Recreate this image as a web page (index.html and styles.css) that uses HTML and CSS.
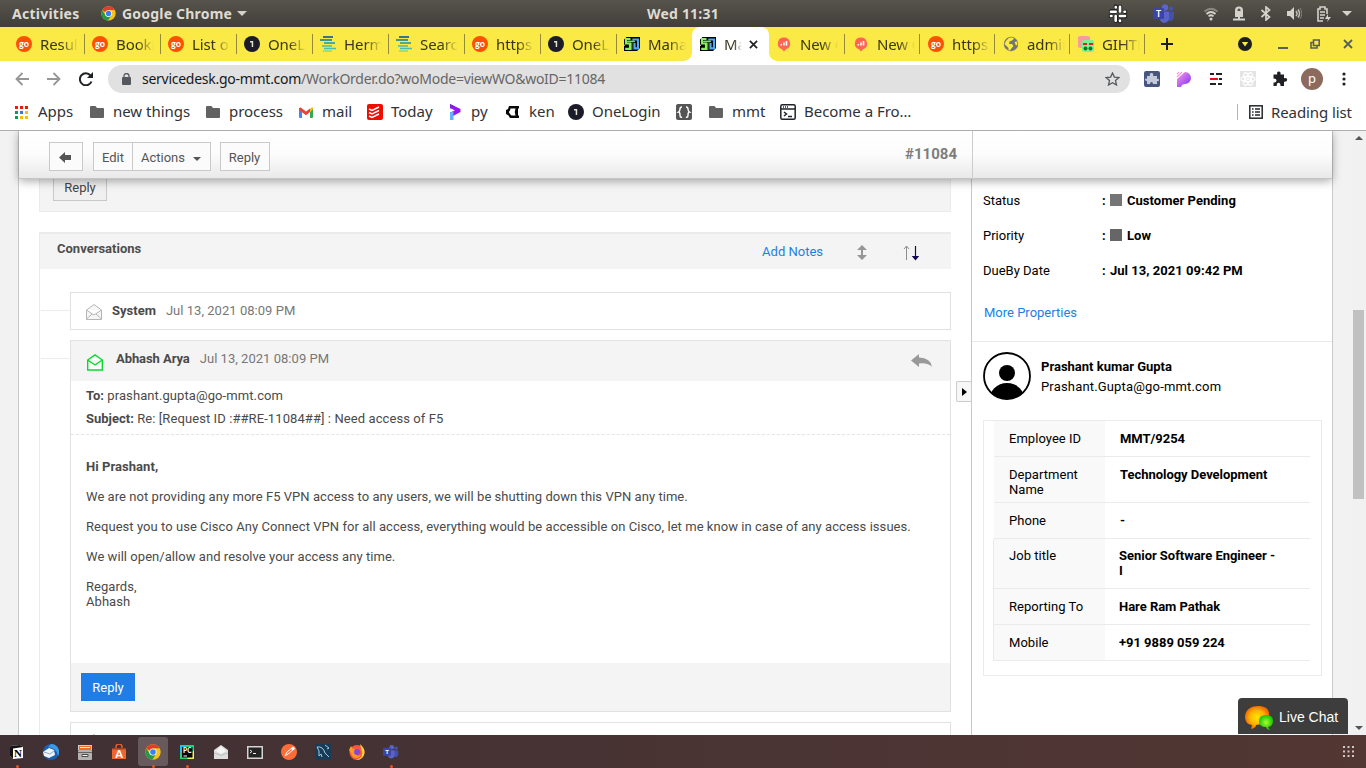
FILE: index.html
```
<!DOCTYPE html>
<html lang="en">
<head>
<meta charset="utf-8">
<title>ManageEngine ServiceDesk Plus</title>
<link rel="stylesheet" href="styles.css">
</head>
<body>
<svg class="defs" aria-hidden="true">
  <symbol id="chrome" viewBox="0 0 48 48"><circle cx="24" cy="24" r="23" fill="#fbc116"/><path d="M4.100 12.500L15 31L24 34L33 30L22 47A23 23 0 0 1 4.100 12.500Z" fill="#279847"/><path d="M4.100 12.500A23 23 0 0 1 43.900 12.500H24L14 20Z" fill="#e33b2e"/><circle cx="24" cy="24" r="10.800" fill="#fff"/><circle cx="24" cy="24" r="8.500" fill="#3b7ff0"/></symbol>
  <symbol id="go" viewBox="0 0 16 16"><circle cx="8" cy="8" r="8" fill="#fd5102"/><text x="8" y="10.600" text-anchor="middle" font-family="Lato, sans-serif" font-weight="900" font-size="9" fill="#fff">go</text></symbol>
  <symbol id="one" viewBox="0 0 16 16"><circle cx="8" cy="8" r="8" fill="#1b1b29"/><path d="M6 5h3.200v6H7.700V6.600H6z" fill="#e4e1d0"/></symbol>
  <symbol id="herm" viewBox="0 0 16 16"><path d="M3 1h10" stroke="#3b7288" stroke-width="2"/><path d="M0 4h12" stroke="#348b94" stroke-width="1.800"/><path d="M4 7h11" stroke="#3ca39a" stroke-width="1.800"/><path d="M2 10h10M4 12.500h12" stroke="#4dbda7" stroke-width="1.600"/><path d="M3 15h9" stroke="#8fd78b" stroke-width="1.600"/></symbol>
  <symbol id="manage" viewBox="0 0 16 16"><path d="M0 3.500L2.500 1H16v11l-3 3H0V10H1L0 8Z" fill="#000"/><path d="M6.500 3H2V7.500H6V12.800H1.200" fill="none" stroke="#8bed63" stroke-width="2.200"/><path d="M8.300 3.500H14V12.300H10.500V7" fill="none" stroke="#51a5f5" stroke-width="2.200"/><path d="M3.500 5h7v.8H3.500ZM7.800 7v7" fill="#8bed63" stroke="#8bed63" stroke-width=".8"/></symbol>
  <symbol id="new" viewBox="0 0 16 16"><path d="M8 1.500a6 6 0 0 1 2.200 11.600L8 15.500l-2-2.300A6 6 0 0 1 8 1.500Z" fill="#ff6554"/><path d="M5.300 9.500V8M8 9.500V6.500M10.500 9.500V5" stroke="#fff" stroke-width="1.600"/></symbol>
  <symbol id="globe" viewBox="0 0 16 16"><circle cx="8" cy="8" r="7.200" fill="#757575"/><path d="M6 1.800q4-1 5 1L9 4.500 6.500 5.500 6 8h3l1.500 2-2.500 3-1 1.500-1.500-.5V12L3 9.500 1.500 8 3 5ZM11.500 6L14 5.500l.5 3-1.500 1Z" fill="#fbe945"/></symbol>
  <symbol id="folder" viewBox="0 0 14 12"><path d="M1 0h4.500l1.500 2h6a1 1 0 0 1 1 1v8a1 1 0 0 1-1 1H1a1 1 0 0 1-1-1V1a1 1 0 0 1 1-1Z" fill="#626262"/></symbol>
  <symbol id="teams" viewBox="0 0 22 20"><circle cx="12" cy="3.500" r="3.200" fill="#5a65c4"/><circle cx="18" cy="4.700" r="2.300" fill="#4552b2"/><path d="M14 8h7v5c0 4-5 5-7 3Z" fill="#4450ae"/><path d="M7 7.500h9v6c0 7-9 7-9 1Z" fill="#5a63c8"/><rect y="4" width="11" height="11" rx="1" fill="#3c44aa"/><text x="5.500" y="12.500" text-anchor="middle" font-family="Lato, sans-serif" font-weight="700" font-size="8.500" fill="#fff">T</text></symbol>
</svg>

<div class="desktop">
  <header class="sysbar">
    <span class="activities">Activities</span>
    <span class="appmenu"><svg width="15" height="15"><use href="#chrome"/></svg><span class="appname">Google Chrome</span><i class="caret"></i></span>
    <span class="clock">Wed 11:31</span>
    <div class="tray">
      <svg width="20" height="20" viewBox="0 0 20 20" fill="none" stroke-linecap="round"><g stroke="#222" stroke-width="4.400"><path d="M7.800 2.500v.2M12 2.800v4M7.500 7.200H3.200M17 8h.2M12.500 12.300h4.700M2.800 12h.2M7.800 12.500v4.200M12 17v.2"/></g><g stroke="#fff" stroke-width="2.600"><path d="M12 2.800v4.700M7.700 7.700H3M7.700 12v4.800M12 12h5"/><path d="M7.800 3v.5M17 7.700h-.5M12 17v-.5M3 12h.5"/></g></svg>
      <svg width="22" height="20"><use href="#teams"/></svg>
      <svg width="14" height="14" viewBox="0 0 14 14" fill="none" stroke-width="1.700"><path d="M.5 4.500Q7-1 13.500 4.500" stroke="#8a8983"/><path d="M2.500 7Q7 3 11.500 7M4.500 9.300Q7 7.200 9.500 9.300" stroke="#d4d2cd"/><circle cx="7" cy="12" r="1.500" fill="#d4d2cd"/></svg>
      <svg width="12" height="15" viewBox="0 0 12 15" fill="#d4d2cd"><path d="M2 11V4.500a4 4 0 0 1 8 0V11ZM5 10h2v2.500h5v2H0v-2h5Z"/><path d="M4.500 5V4a1.500 1.500 0 0 1 3 0v1" fill="#56544d"/></svg>
      <svg width="10" height="15" viewBox="0 0 10 15" fill="none" stroke="#d4d2cd" stroke-width="1.700"><path d="M.5 4l8 7L5 14V1l3.500 3-8 7"/></svg>
      <svg width="15" height="13" viewBox="0 0 15 13"><path d="M0 4h3l4-4v13L3 9H0Z" fill="#d4d2cd"/><path d="M9 4q2 2.500 0 5M11 2.500q3 4 0 8" fill="none" stroke="#c0beb9" stroke-width="1.500"/><path d="M13 1q3.500 5.500 0 11" fill="none" stroke="#85837d"/></svg>
      <svg width="14" height="16" viewBox="0 0 14 16" fill="none" stroke="#d4d2cd" stroke-width="1.600"><path d="M6 15H1V3h2V1h5v2h2v5M3 6h5M3 9h5M3 12h4"/><path d="M11 8l-3 5h3l-1 3 4-5h-3Z" fill="#d4d2cd" stroke="none"/></svg>
      <i class="caret"></i>
    </div>
  </header>

  <nav class="tabs">
    <div class="tab"><svg><use href="#go"/></svg><span>Results</span></div>
    <div class="tab"><svg><use href="#go"/></svg><span>Bookings</span></div>
    <div class="tab"><svg><use href="#go"/></svg><span>List of</span></div>
    <div class="tab"><svg><use href="#one"/></svg><span>OneLogin</span></div>
    <div class="tab"><svg><use href="#herm"/></svg><span>Hermes</span></div>
    <div class="tab"><svg><use href="#herm"/></svg><span>Search</span></div>
    <div class="tab"><svg><use href="#go"/></svg><span>https://</span></div>
    <div class="tab"><svg><use href="#one"/></svg><span>OneLogin</span></div>
    <div class="tab nosep"><svg><use href="#manage"/></svg><span>Manage</span></div>
    <div class="tab active"><svg><use href="#manage"/></svg><span>Manage</span><svg class="close" viewBox="0 0 10 10"><path d="M1 1l8 8M9 1L1 9" stroke="#222" stroke-width="1.900"/></svg></div>
    <div class="tab after"><svg><use href="#new"/></svg><span>New Or</span></div>
    <div class="tab narrow"><svg><use href="#new"/></svg><span>New Or</span></div>
    <div class="tab narrow"><svg><use href="#go"/></svg><span>https://</span></div>
    <div class="tab narrow"><svg><use href="#globe"/></svg><span>admin</span></div>
    <div class="tab narrow"><svg viewBox="0 0 16 16"><rect width="12" height="12" rx="2" fill="#fb9a9d"/><rect x="4" y="4" width="12" height="12" rx="2" fill="#7af293"/><path d="M5 8h4M11 8h4" stroke="#d22" stroke-width="2"/><circle cx="7.500" cy="12.500" r="2" fill="#137b18"/><circle cx="12.500" cy="12.500" r="2" fill="#137b18"/></svg><span>GIHTE</span></div>
    <svg class="plus" viewBox="0 0 12 12"><path d="M6 0v12M0 6h12" stroke="#1d1d1d" stroke-width="2"/></svg>
    <div class="winctl">
      <svg width="14" height="14"><circle cx="7" cy="7" r="7" fill="#1d1e20"/><path d="M3.800 5h6.400L7 9.500Z" fill="#fbe945"/></svg>
      <svg width="10" height="10"><path d="M0 9h10" stroke="#57605b" stroke-width="2"/></svg>
      <svg width="10" height="10" fill="none" stroke="#57605b" stroke-width="1.600"><path d="M3.500 1h5.700v5.500H3.500ZM3 3.500H1V9h6V7"/></svg>
      <svg width="10" height="10"><path d="M1 1l8 8M9 1L1 9" stroke="#57605b" stroke-width="1.800"/></svg>
    </div>
  </nav>

  <div class="toolbar">
    <svg class="nav-btn" width="14" height="14" viewBox="0 0 14 14" fill="none" stroke="#969696" stroke-width="1.800"><path d="M14 7H1.500M7.500 1L1.500 7l6 6"/></svg>
    <svg class="nav-btn" width="14" height="14" viewBox="0 0 14 14" fill="none" stroke="#969696" stroke-width="1.800"><path d="M0 7h12.500M6.500 1l6 6-6 6"/></svg>
    <svg class="nav-btn" width="14" height="14" viewBox="0 0 14 14"><path d="M11.500 3.500A6 6 0 1 0 12.500 9.500" fill="none" stroke="#202124" stroke-width="2"/><path d="M14 0v6H8Z" fill="#202124"/></svg>
    <div class="omnibox">
      <svg width="9" height="12" viewBox="0 0 9 12"><rect y="4" width="9" height="8" rx="1" fill="#55595e"/><path d="M2 5V3a2.500 2.500 0 0 1 5 0v2" fill="none" stroke="#55595e" stroke-width="1.300"/></svg>
      <span class="url"><b>servicedesk.go-mmt.com</b>/WorkOrder.do?woMode=viewWO&amp;woID=11084</span>
      <svg class="star" width="15" height="14" viewBox="0 0 15 14"><path d="M7.500 1l1.900 4.100 4.400.5-3.300 3 1 4.400-4-2.300-4 2.300 1-4.400-3.300-3 4.400-.5Z" fill="none" stroke="#55595e" stroke-width="1.300"/></svg>
    </div>
    <div class="exts">
      <svg viewBox="0 0 16 16"><rect width="16" height="16" rx="2" fill="#47567e"/><path d="M3 5h3q-1-3 1.500-3T9 5h4v3q2-1 2 1t-2 1v3H9q0-2-1.500-2T6 13H3v-3q-2 0-2-1.500T3 8Z" fill="#c3cad8"/></svg>
      <svg viewBox="0 0 16 16"><defs><linearGradient id="pg" x2="1" y2="1"><stop stop-color="#ff9ae0"/><stop offset="1" stop-color="#7c2cff"/></linearGradient></defs><path d="M1 16V8L9 1a6 6 0 0 1 0 12q-3 0-4 3Z" fill="url(#pg)"/><path d="M1 6L6 1M1 3l2-2" stroke="#ff9ae0" stroke-width="1.300"/></svg>
      <svg viewBox="0 0 16 16" stroke-width="2"><path d="M2 3h4M8 3h6M11 8h3M2 13h6M10 13h4" stroke="#222"/><path d="M2 8h8" stroke="#f20d0d"/></svg>
      <svg viewBox="0 0 16 16"><rect width="16" height="16" fill="#e4e4e4"/><g fill="none" stroke="#fff" stroke-width="1.200"><ellipse cx="8" cy="8" rx="7" ry="2.700"/><ellipse cx="8" cy="8" rx="7" ry="2.700" transform="rotate(60 8 8)"/><ellipse cx="8" cy="8" rx="7" ry="2.700" transform="rotate(120 8 8)"/></g><circle cx="8" cy="8" r="1.400" fill="#fff"/></svg>
      <svg viewBox="0 0 16 16"><path d="M1.500 3.500h3.700q-.7-3 1.600-3t1.700 3H12v3.700q3.200-.7 3.200 1.600T12 10.800v4.200H8.500q0-3.200-1.900-3.200T4.700 15H1.500v-3.400q3-.2 3-2.100t-3-2Z" fill="#202124"/></svg>
    </div>
    <span class="avatar">p</span>
    <svg width="4" height="14" fill="#202124"><circle cx="2" cy="2" r="1.600"/><circle cx="2" cy="7" r="1.600"/><circle cx="2" cy="12" r="1.600"/></svg>
  </div>

  <div class="bookmarks">
    <div class="bm"><svg width="13" height="13" viewBox="0 0 13 13"><g stroke-width="3"><path d="M0 1.500h13" stroke="#ea1d0d" stroke-dasharray="3 2"/><path d="M0 6.500h3M0 11.500h3" stroke="#0c9d50"/><path d="M5 6.500h3" stroke="#3478f6"/><path d="M10 6.500h3" stroke="#fbbc05"/><path d="M5 11.500h8" stroke="#fbbc05" stroke-dasharray="3 2"/></g></svg><span>Apps</span></div>
    <div class="bm f"><svg width="14" height="12"><use href="#folder"/></svg><span>new things</span></div>
    <div class="bm f"><svg width="14" height="12"><use href="#folder"/></svg><span>process</span></div>
    <div class="bm f"><svg width="14" height="11" viewBox="0 0 14 11"><path d="M0 1v9q0 1 1 1h2V5Z" fill="#4285f4"/><path d="M14 1v9q0 1-1 1h-2V5Z" fill="#34a853"/><path d="M11 5V2l2-2q1 0 1 2Z" fill="#fbbc04"/><path d="M0 1.500Q1-.5 3 1.500l4 3 4-3v3.500L7 8.200 0 3Z" fill="#ea4335"/></svg><span>mail</span></div>
    <div class="bm"><svg width="16" height="16"><rect width="16" height="16" rx="2" fill="#f00d00"/><path d="M2 5l3 1.500L12 3M2 8.500L5 10l7-3.500M2 12l3 1.500L12 10" fill="none" stroke="#fff" stroke-width="1.400"/></svg><span>Today</span></div>
    <div class="bm py"><svg width="12" height="16"><path d="M1 0l10.500 5v3L4 12H1V8.500L6 6.500 1 4Z" fill="#9716f4"/><path d="M1 0l5 2.500-5 2Z" fill="#7a22e0"/><path d="M1 8.500l3.500-1V16H1Z" fill="#62b5fa"/></svg><span>py</span></div>
    <div class="bm ken"><svg width="13" height="12"><path d="M3 0h10v2.500h-1v7h1V12H4L2.500 9.500 0 8V4l2-1Z" fill="#090909"/><path d="M4.500 2.500h5L8.800 6l.7 3.500H5.500L4 8 2.800 6 4 4.500Z" fill="#fff"/></svg><span>ken</span></div>
    <div class="bm"><svg width="16" height="16"><use href="#one"/></svg><span>OneLogin</span></div>
    <div class="bm"><svg width="16" height="16"><rect width="16" height="16" rx="2" fill="#555"/><path d="M6 3Q4 3 4 5T2.500 8Q4 8 4 11t2 2M10 3q2 0 2 2t1.500 3Q12 8 12 11t-2 2" fill="none" stroke="#fff" stroke-width="1.400"/></svg></div>
    <div class="bm f"><svg width="14" height="12"><use href="#folder"/></svg><span>mmt</span></div>
    <div class="bm"><svg width="16" height="16"><g fill="none" stroke="#20242a" stroke-width="1.500"><rect x=".8" y=".8" width="14.400" height="14.400" rx="1.500"/><path d="M1 5h14M4 8l2.500 2L4 12M8 12.500h4"/><path d="M3 3h6" stroke-dasharray="1 1"/></g></svg><span class="fro">Become a Fro…</span></div>
    <div class="reading"><svg width="14" height="14"><g fill="none" stroke="#25272b" stroke-width="1.500"><rect x=".8" y=".8" width="12.400" height="12.400"/><path d="M6 4h5M6 7h5M6 10h5M3 4h1.500M3 7h1.500M3 10h1.500"/></g></svg><span>Reading list</span></div>
  </div>

  <main class="page">
    <section class="frame">
      <div class="actionbar">
        <div class="actions">
          <button class="btn back"><svg width="12" height="11"><path d="M0 5.500L6 0v3h6v5H6v3Z" fill="#555"/></svg></button>
          <button class="btn edit">Edit</button><button class="btn menu">Actions <i class="caret dark"></i></button>
          <button class="btn reply">Reply</button>
          <span class="ticket">#11084</span>
        </div>
      </div>
      <div class="columns">
        <div class="left">
          <div class="prev"><button class="btn old">Reply</button></div>
          <div class="conv">
            <div class="convhead"><b>Conversations</b><a>Add Notes</a>
              <svg class="updown" width="10" height="15" fill="#969696"><path d="M5 0l5 5H6v5h4l-5 5-5-5h4V5H0Z"/></svg>
              <svg class="sort" width="16" height="16"><path d="M3.500 15V1M1 4l2.500-3L6 4" fill="none" stroke="#8e8e8e"/><path d="M12.500 1v13M10 11.500l2.500 3 2.500-3Z" fill="#130b58" stroke="#130b58" stroke-width="1.200"/></svg>
            </div>
            <div class="cards">
              <article class="card system">
                <i class="tick"></i>
                <svg width="16" height="16" fill="#f6f6f6" stroke="#b5b5b5"><path d="M.5 6L8 .5 15.500 6v9.500H.5ZM.5 6L8 11l7.500-5M.5 15L6 10M15.500 15L10 10"/></svg>
                <b>System</b><time>Jul 13, 2021 08:09 PM</time>
              </article>
              <article class="card mail">
                <div class="mailhead">
                  <i class="tick"></i>
                  <svg width="16" height="17" fill="#fff" stroke="#05dc28" stroke-width="1.400"><path d="M.7 6L8 .9 15.300 6v10H.7ZM.7 6L8 11l7.300-5"/></svg>
                  <b>Abhash Arya</b><time>Jul 13, 2021 08:09 PM</time>
                  <svg class="fwd" width="21" height="14"><path d="M0 6.500L8 0v3.500Q20 4 21 13 17 8.500 8 9.500V13Z" fill="#999"/></svg>
                </div>
                <div class="meta"><p><b>To:</b> prashant.gupta@go-mmt.com</p><p><b>Subject:</b> Re: [Request ID :##RE-11084##] : Need access of F5</p></div>
                <div class="body">
                  <p><b>Hi Prashant,</b></p>
                  <p>We are not providing any more F5 VPN access to any users, we will be shutting down this VPN any time.</p>
                  <p>Request you to use Cisco Any Connect VPN for all access, everything would be accessible on Cisco, let me know in case of any access issues.</p>
                  <p>We will open/allow and resolve your access any time.</p>
                  <p>Regards,<br>Abhash</p>
                </div>
                <div class="foot"><button class="primary">Reply</button></div>
              </article>
              <article class="card next"><svg width="16" height="16" fill="#f6f6f6" stroke="#b5b5b5"><path d="M.5 6L8 .5 15.500 6v9.500H.5Z"/></svg></article>
            </div>
          </div>
        </div>
        <aside class="side">
          <button class="collapse"></button>
          <dl class="props">
            <dt>Status</dt><dd><span>:</span><i class="sq"></i><span>Customer Pending</span></dd>
            <dt>Priority</dt><dd><span>:</span><i class="sq low"></i><span>Low</span></dd>
            <dt>DueBy Date</dt><dd><span>:</span><span>Jul 13, 2021 09:42 PM</span></dd>
          </dl>
          <a class="more">More Properties</a>
          <div class="person">
            <svg width="48" height="48"><clipPath id="c"><circle cx="24" cy="24" r="23"/></clipPath><circle cx="24" cy="24" r="23" fill="#fff" stroke="#000" stroke-width="1.800"/><circle cx="24" cy="21" r="8" /><circle cx="24" cy="49" r="18" clip-path="url(#c)"/></svg>
            <div><b>Prashant kumar Gupta</b><span>Prashant.Gupta@go-mmt.com</span></div>
          </div>
          <div class="details">
            <div class="row r1"><span>Employee ID</span><b>MMT/9254</b></div>
            <div class="row r2"><span>Department Name</span><b>Technology Development</b></div>
            <div class="row r3"><span>Phone</span><b>-</b></div>
            <div class="row out r4"><span>Job title</span><b>Senior Software Engineer - I</b></div>
            <div class="row out"><span>Reporting To</span><b>Hare Ram Pathak</b></div>
            <div class="row out"><span>Mobile</span><b>+91 9889 059 224</b></div>
          </div>
        </aside>
      </div>
    </section>
    <div class="scroll"><i class="up"></i><i class="thumb"></i><i class="down"></i></div>
    <div class="chat"><svg width="29" height="25"><defs><radialGradient id="o"><stop stop-color="#ffe600"/><stop offset=".6" stop-color="#ffb400"/><stop offset="1" stop-color="#f06c00"/></radialGradient><radialGradient id="g"><stop stop-color="#a8ff2c"/><stop offset="1" stop-color="#18c300"/></radialGradient></defs><path d="M0 12C0 4 7 1 13 1s11 2 11 8-4 10-13 11q0 3-5 4l1-4Q0 19 0 12Z" fill="url(#o)"/><path d="M14 16q0-6 7-6t7 6q0 5-5 6l2 3q-3 0-4-3-7 0-7-6Z" fill="url(#g)"/></svg><span>Live Chat</span></div>
  </main>

  <footer class="dock">
    <div class="app run"><svg viewBox="0 0 16 16"><path d="M1 2l10-1 3 2v11l-10 1-3-3Z" fill="#fff"/><path d="M1 2l3 2v11l-3-3Z" fill="#111"/><path d="M1 2l10-1 3 2L4 4.500Z" fill="#111"/><text x="9" y="13" text-anchor="middle" font-family="Liberation Serif, serif" font-weight="700" font-size="11">N</text></svg></div>
    <div class="app"><svg viewBox="0 0 16 16"><circle cx="8" cy="8" r="8" fill="#1b5fb4"/><path d="M8 0a8 8 0 0 1 7 12Q14 4 5 3Z" fill="#3b9ae8"/><path d="M0 8l6-4 5 2 1 5-6 3-5-2Z" fill="#f1f4f7"/><path d="M1 8l6 2 4-3" fill="none" stroke="#91a8c2"/></svg></div>
    <div class="app"><svg viewBox="0 0 16 16"><path d="M1 1h14v5H1Z" fill="#cfcdc9"/><path d="M2 2h12v4H2Z" fill="#ed7024"/><path d="M3 3h10v1H3Z" fill="#fff0c8"/><rect x="1" y="6" width="14" height="10" rx="1" fill="#b4b2af"/><path d="M1 8.500h14" stroke="#666"/><path d="M5 10.500h6v2H5Z" fill="#f5f5f5" stroke="#4a4a48"/></svg></div>
    <div class="app"><svg viewBox="0 0 16 16"><path d="M5 5V3a3 3 0 0 1 6 0v2" fill="none" stroke="#ec5c28" stroke-width="1.500"/><path d="M1 4h14v11H1Z" fill="#ee6533"/><path d="M1 4h14v1.500H1Z" fill="#aa421e"/><text x="8" y="14" text-anchor="middle" font-family="Lato, sans-serif" font-weight="900" font-size="11" fill="#fff">A</text></svg></div>
    <div class="app run current"><svg viewBox="0 0 16 16"><use href="#chrome"/></svg></div>
    <div class="app run"><svg viewBox="0 0 16 16"><path d="M1 1h14v14H1Z" fill="#1fd27d"/><path d="M8 15h7V6Z" fill="#eef74e"/><path d="M1 1h6L1 9Z" fill="#20c3ef"/><rect x="3" y="3" width="10.500" height="10.500" fill="#050505"/><text x="8.300" y="9.300" text-anchor="middle" font-family="Lato, sans-serif" font-weight="900" font-size="6.500" fill="#fff">PC</text><path d="M4.500 12H8" stroke="#fff"/></svg></div>
    <div class="app"><svg viewBox="0 0 16 16"><path d="M1 6L8 1l7 5v9H1Z" fill="#dedede"/><path d="M3 7l5-5 5 5-5 3Z" fill="#f5f5f5"/><path d="M1 9l5 1.500 2 1 2-1L15 9" fill="none" stroke="#bcbcbc"/></svg></div>
    <div class="app"><svg viewBox="0 0 16 16"><rect y="2" width="16" height="13" fill="#d5d5d0"/><rect x="1.500" y="3.500" width="13" height="10" fill="#242424"/><path d="M3 6l2 1.500L3 9M6 9.500h3" fill="none" stroke="#eee"/></svg></div>
    <div class="app"><svg viewBox="0 0 16 16"><circle cx="8" cy="8" r="8" fill="#ff6c37"/><path d="M4 12l2-4 5-4 1.500 1.500L7 10Z" fill="none" stroke="#fff"/><circle cx="12" cy="4.500" r="1.700" fill="#fff"/></svg></div>
    <div class="app"><svg viewBox="0 0 16 16"><rect width="16" height="16" rx="1.500" fill="#183c58"/><path d="M2 3q6-1 8 6l4 4M2 3l2 4v5l2-2 1 3M10 1l4 3-2 1" fill="none" stroke="#a7cbd9"/></svg></div>
    <div class="app"><svg viewBox="0 0 16 16"><circle cx="8" cy="8.500" r="7.500" fill="#ff543d"/><path d="M11 0q6 5 4 11-2 5-8 5 7-2 6-8Z" fill="#ffd33c"/><path d="M0 6l2-4 2 3 5 1-3 2 2 4 4-1q-3 5-8 2Z" fill="#ff9a22"/><circle cx="8" cy="8" r="3" fill="#8746d8"/></svg></div>
    <div class="app run"><svg viewBox="0 0 22 20"><use href="#teams"/></svg></div>
    <svg class="grid" width="11" height="11" fill="none" stroke="#d2c9c7" stroke-width="2" stroke-dasharray="2 2.500"><path d="M0 1h11M0 5.500h11M0 10h11"/></svg>
  </footer>
</div>
</body>
</html>
```
FILE: styles.css
```
* { box-sizing: border-box; }
body { margin: 0; overflow: hidden; font: 13px/15px Roboto, sans-serif; color: #000; }
p, dl, dd { margin: 0; }
button { font: inherit; padding: 0; }
svg { flex: none; display: block; }
b { font-weight: 700; }
.defs { display: none; }
.desktop { width: 1366px; height: 768px; display: grid; grid-template-rows: 27px 34px 35px 35px 604px 33px; background: #fff; }
.caret { display: block; width: 0; border: 5px solid transparent; border-top-color: #d4d2cd; border-bottom: 0; flex: none; }

/* System bar */
.sysbar { background: linear-gradient(#57544c, #403e39); color: #dfdbd2; display: grid; grid-template-columns: 101px 546px 1fr 258px; align-items: center; font: 700 14px/27px "Noto Sans", sans-serif; }
.activities { padding-left: 12px; letter-spacing: .25px; }
.appmenu { display: flex; align-items: center; }
.appname { width: 111px; margin-left: 6px; margin-right: 4px; letter-spacing: .2px; white-space: nowrap; }
.clock { letter-spacing: .2px; }
.tray { display: grid; grid-template-columns: 45px 51px 29px 28px 26px 30px 25px 16px; align-items: center; }

/* Tab strip */
.tabs { background: #fbe945; display: flex; padding-left: 9px; font: 15px/34px "Noto Sans", sans-serif; color: #38361f; }
.tab { width: 76px; padding-left: 7px; display: flex; align-items: center; position: relative; flex: none; }
.tab.narrow { width: 75px; padding-left: 8px; }
.tab > svg { width: 16px; height: 16px; margin-right: 8px; }
.tab > span { width: 38px; overflow: hidden; white-space: nowrap; letter-spacing: -.1px; -webkit-mask-image: linear-gradient(90deg, #000 55%, transparent); mask-image: linear-gradient(90deg, #000 55%, transparent); }
.tab::after { content: ""; position: absolute; right: 0; top: 7px; width: 1px; height: 20px; background: #95893a; }
.tab.nosep { border-bottom-right-radius: 8px; }
.tab.nosep::after, .tab.active::after { display: none; }
.tab.active { background: #fff; border-radius: 8px 8px 0 0; margin-left: -1px; width: 77px; padding-left: 8px; }
.tab.active::before { content: ""; position: absolute; left: -8px; right: -8px; bottom: 0; height: 8px; background: radial-gradient(circle at 0 0, transparent 7.500px, #fff 8px) left / 8px 8px no-repeat, radial-gradient(circle at 100% 0, transparent 7.500px, #fff 8px) right / 8px 8px no-repeat; }
.tab.active > span { width: 18px; }
.tab > svg.close { width: 9px; height: 9px; margin: 0 0 0 7px; }
.plus { width: 12px; height: 12px; margin: 11px 0 0 16px; }
.winctl { margin-left: auto; width: 128px; display: grid; grid-template-columns: 40px 32px 33px 10px; align-items: center; }

/* Address bar */
.toolbar { display: flex; align-items: center; padding: 0 19px 0 15px; }
.nav-btn { margin-right: 18px; }
.omnibox { width: 1022px; height: 28px; background: #e1e1e1; border-radius: 14px; margin-left: -3px; display: flex; align-items: center; padding: 0 10px 0 14px; }
.url { margin-left: 11px; font: 14px/26px "Noto Sans", sans-serif; color: #666; letter-spacing: -.27px; white-space: nowrap; }
.url b { font-weight: 400; color: #17181a; }
.star { margin-left: auto; }
.exts { display: flex; gap: 16px; margin-left: 14px; }
.exts svg { width: 16px; height: 16px; }
.avatar { width: 22px; height: 22px; border-radius: 50%; background: #8d6a5e; color: #fff; text-align: center; font: 13px/20px "Noto Sans", sans-serif; margin: 0 19px 0 13px; flex: none; }

/* Bookmarks */
.bookmarks { display: grid; grid-template-columns: 75px 116px 93px 68px 82px 57px 62px 108px 33px 71px 457px 1fr; padding-left: 15px; align-items: center; border-bottom: 1px solid #adadad; font: 15px/30px "Noto Sans", sans-serif; color: #303236; }
.bm, .reading { display: flex; align-items: center; white-space: nowrap; gap: 8px; height: 30px; margin-bottom: 4px; }
.bm span { letter-spacing: -.03px; }
.bm svg { margin-top: 2px; }
.bm.f { gap: 9px; }
.bm:first-child { gap: 10px; }
.bm.py, .bm.ken { gap: 10px; }
.reading { border-left: 1px solid #b5b5b5; height: 16px; padding-left: 11px; margin-bottom: 2px; letter-spacing: -.1px; }

/* Page */
.page { position: relative; background: #f2f2f2; display: grid; grid-template-columns: 1351px 15px; overflow: hidden; }
.frame { margin-left: 18px; width: 1315px; height: 604px; border: solid #c9c9c9; border-width: 0 1px; background: #fff; display: grid; grid-template-rows: 48px 556px; }
.actionbar { position: relative; z-index: 1; background: linear-gradient(#fff, #fcfcfc 50%, #e9e9e9); border-bottom: 1px solid #c5c5c5; box-shadow: 0 2px 9px rgba(0,0,0,.35); }
.actions { width: 954px; height: 48px; border-right: 1px solid #ccc; display: flex; padding: 11px 15px 0 30px; color: #555; }
.btn { height: 29px; border: 1px solid #c9c9c9; background: #fbfbfb; color: #555; display: flex; align-items: center; justify-content: center; padding-top: 1px; }
.back { width: 34px; margin-right: 10px; padding-right: 2px; }
.edit { width: 40px; }
.menu { width: 79px; margin-left: -1px; margin-right: 9px; gap: 8px; padding-right: 1px; }
.caret.dark { border-width: 4px; border-bottom: 0; border-top-color: #555; margin-top: 3px; }
.reply { width: 50px; padding-right: 1px; }
.ticket { margin-left: auto; font: 700 15px/24px Roboto, sans-serif; color: #7d7d7d; }
.columns { display: grid; grid-template-columns: 952px 361px; }
.left { padding-left: 20px; width: 932px; }
.prev { height: 33px; border: 1px solid #ebebeb; border-top: 0; background: #f4f4f4; padding-left: 13px; }
.old { width: 54px; height: 22px; border-top: 0; background: #f0f0f0; color: #444; padding: 0 0 4px; }
.conv { margin-top: 20px; border-left: 1px solid #ebebeb; }
.convhead { height: 37px; background: #f4f4f4; border-top: 2px solid #ebebeb; display: flex; align-items: center; padding-left: 17px; color: #4d4d4d; padding-right: 32px; }
.convhead b { margin-top: -6px; }
.convhead a { margin-left: auto; margin-top: -1px; color: #1c7fe4; }
.updown { margin: 1px 0 0 34px; }
.sort { margin: 2px 0 0 36px; }
.cards { padding: 23px 0 0 30px; display: grid; gap: 10px; color: #4a4a4a; }
.card { border: 1px solid #e1e1e1; }
.card time { color: #777; letter-spacing: .03px; }
.tick { position: absolute; left: -30px; top: 17px; width: 29px; height: 1px; background: #ececec; }
.system { height: 38px; position: relative; display: flex; padding: 10px 15px 0; }
.system b { margin: 0 10px; }
.mail { height: 372px; }
.mailhead { height: 40px; position: relative; background: #f4f4f4; display: flex; padding: 10px 18px 0 16px; }
.mailhead > svg:nth-child(2) { margin-top: 3px; }
.system > svg:nth-child(2) { margin-top: 1px; }
.mailhead b { margin: 0 10px 0 13px; letter-spacing: -.07px; }
.fwd { margin: 3px 0 0 auto; }
.meta { height: 54px; border-bottom: 1px dashed #e4e4e4; padding: 7px 15px 0; display: grid; gap: 8px; align-content: start; letter-spacing: .09px; }
.meta b { letter-spacing: 0; }
.body { height: 228px; padding: 24px 15px 0; display: grid; gap: 15px; align-content: start; white-space: nowrap; letter-spacing: .05px; }
.foot { height: 48px; background: #f4f4f4; padding: 10px; }
.primary { display: block; width: 54px; height: 28px; border: 0; background: #207de5; color: #fff; }
.next { height: 40px; padding: 11px 15px; }

/* Side panel */
.side { position: relative; border-left: 1px solid #c9c9c9; }
.collapse { position: absolute; left: -16px; top: 202px; width: 15px; height: 21px; background: #f7f7f7; border: 1px solid #ccc; border-right: 0; border-radius: 2px 0 0 2px; }
.collapse::after { content: ""; display: block; margin-left: 5px; width: 0; border: 4px solid transparent; border-left: 5px solid #000; border-right: 0; }
.props { display: grid; grid-template-columns: 119px 1fr; grid-auto-rows: 35px; padding: 14px 0 0 11px; height: 119px; }
.props dd { font-weight: 700; display: flex; gap: 5px; white-space: nowrap; letter-spacing: .03px; }
.props dd > span:first-child { width: 3px; }
.sq { width: 12px; height: 12px; background: #757575; margin-top: 1px; }
.sq.low { background: #666; }
.more { display: block; height: 43px; padding: 7px 12px 0; color: #1c7fe4; }
.person { border-top: 1px solid #e9e9e9; display: flex; padding: 10px 11px 0; gap: 10px; height: 79px; }
.person b, .person span { display: block; }
.person span { letter-spacing: .17px; }
.person b { margin: 7px 0 5px; }
.details { margin-left: 11px; width: 339px; height: 256px; border: 1px solid #ebebeb; padding: 0 11px 0 9px; }
.row { height: 36px; margin-left: 1px; border-bottom: 1px solid #ebebeb; display: grid; grid-template-columns: 111px 1fr; }
.row span { background: #f9f9f9; padding: 10px 20px 0 15px; letter-spacing: .04px; }
.row b { padding: 10px 30px 0 15px; letter-spacing: -.03px; }
.r2 { height: 46px; }
.r4 { height: 50px; }
.r4 span, .r4 b { padding-top: 9px; }
.row.out { margin-left: 0; border-left: 1px solid #ebebeb; }
.row.out b { padding-left: 14px; }

.scroll { position: relative; background: #f1f1f1; }
.scroll i { position: absolute; left: 4px; border: 4px solid transparent; }
.scroll .up { top: 5px; border-top: 0; border-bottom-color: #555; }
.scroll .down { bottom: 5px; border-bottom: 0; border-top-color: #555; }
.scroll .thumb { left: 2px; top: 179px; width: 11px; height: 189px; border: 0; background: #c1c1c1; }
.chat { position: absolute; left: 1238px; bottom: 1px; z-index: 2; width: 110px; height: 36px; background: #3d3d3d; color: #fff; border-radius: 4px 4px 0 0; display: flex; align-items: center; padding: 2px 0 0 7px; gap: 5px; font: 14px "Liberation Sans", Arial, sans-serif; white-space: nowrap; }

/* Dock */
.dock { background: linear-gradient(90deg, #403034, #523733); display: flex; align-items: center; }
.app { width: 34px; height: 33px; padding: 9px 9px 0; position: relative; }
.app svg { width: 16px; height: 16px; }
.app.run::after { content: ""; position: absolute; left: 16px; bottom: 0; width: 3px; height: 3px; border-radius: 50%; background: #e95420; }
.app.current::before { content: ""; position: absolute; inset: 2px 2px 2px; border-radius: 3px; background: rgba(255,255,255,.2); }
.app.current svg { position: relative; }
.grid { margin: 0 12px 0 auto; }
```
